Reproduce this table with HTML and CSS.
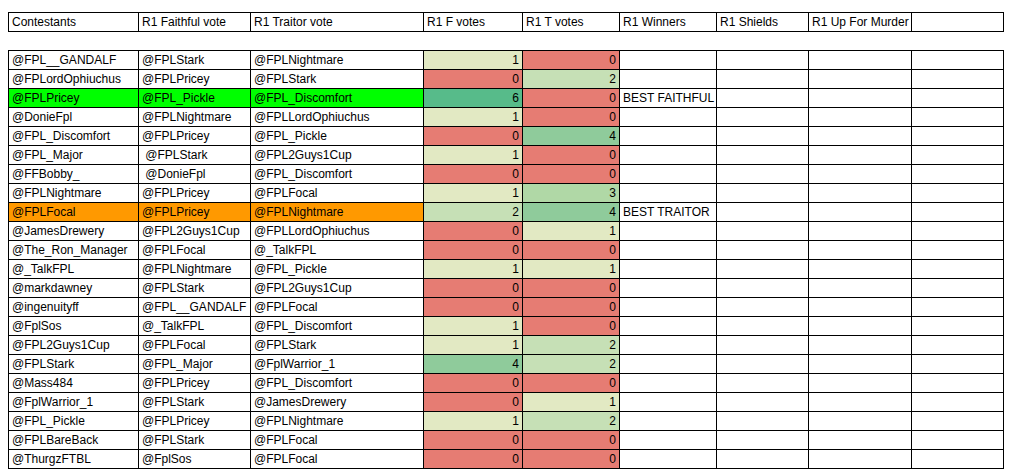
FILE: index.html
```html
<!DOCTYPE html>
<html>
<head>
<meta charset="utf-8">
<link rel="stylesheet" href="styles.css">
</head>
<body>
<div class="sheet">
<table class="grid">
<colgroup>
<col class="c1"><col class="c2"><col class="c3"><col class="c4"><col class="c5"><col class="c6"><col class="c7"><col class="c8"><col class="c9">
</colgroup>
<tr class="head"><td>Contestants</td><td>R1 Faithful vote</td><td>R1 Traitor vote</td><td>R1 F votes</td><td>R1 T votes</td><td>R1 Winners</td><td>R1 Shields</td><td>R1 Up For Murder</td><td></td></tr>
<tr class="gap"><td></td><td></td><td></td><td></td><td></td><td></td><td></td><td></td><td></td></tr>
<tr><td>@FPL__GANDALF</td><td>@FPLStark</td><td>@FPLNightmare</td><td class="n v1">1</td><td class="n v0">0</td><td></td><td></td><td></td><td></td></tr>
<tr><td>@FPLordOphiuchus</td><td>@FPLPricey</td><td>@FPLStark</td><td class="n v0">0</td><td class="n v2">2</td><td></td><td></td><td></td><td></td></tr>
<tr><td class="green">@FPLPricey</td><td class="green">@FPL_Pickle</td><td class="green">@FPL_Discomfort</td><td class="n v6">6</td><td class="n v0">0</td><td>BEST FAITHFUL</td><td></td><td></td><td></td></tr>
<tr><td>@DonieFpl</td><td>@FPLNightmare</td><td>@FPLLordOphiuchus</td><td class="n v1">1</td><td class="n v0">0</td><td></td><td></td><td></td><td></td></tr>
<tr><td>@FPL_Discomfort</td><td>@FPLPricey</td><td>@FPL_Pickle</td><td class="n v0">0</td><td class="n v4">4</td><td></td><td></td><td></td><td></td></tr>
<tr><td>@FPL_Major</td><td class="pre"> @FPLStark</td><td>@FPL2Guys1Cup</td><td class="n v1">1</td><td class="n v0">0</td><td></td><td></td><td></td><td></td></tr>
<tr><td>@FFBobby_</td><td class="pre"> @DonieFpl</td><td>@FPL_Discomfort</td><td class="n v0">0</td><td class="n v0">0</td><td></td><td></td><td></td><td></td></tr>
<tr><td>@FPLNightmare</td><td>@FPLPricey</td><td>@FPLFocal</td><td class="n v1">1</td><td class="n v3">3</td><td></td><td></td><td></td><td></td></tr>
<tr><td class="orange">@FPLFocal</td><td class="orange">@FPLPricey</td><td class="orange">@FPLNightmare</td><td class="n v2">2</td><td class="n v4">4</td><td>BEST TRAITOR</td><td></td><td></td><td></td></tr>
<tr><td>@JamesDrewery</td><td>@FPL2Guys1Cup</td><td>@FPLLordOphiuchus</td><td class="n v0">0</td><td class="n v1">1</td><td></td><td></td><td></td><td></td></tr>
<tr><td>@The_Ron_Manager</td><td>@FPLFocal</td><td>@_TalkFPL</td><td class="n v0">0</td><td class="n v0">0</td><td></td><td></td><td></td><td></td></tr>
<tr><td>@_TalkFPL</td><td>@FPLNightmare</td><td>@FPL_Pickle</td><td class="n v1">1</td><td class="n v1">1</td><td></td><td></td><td></td><td></td></tr>
<tr><td>@markdawney</td><td>@FPLStark</td><td>@FPL2Guys1Cup</td><td class="n v0">0</td><td class="n v0">0</td><td></td><td></td><td></td><td></td></tr>
<tr><td>@ingenuityff</td><td>@FPL__GANDALF</td><td>@FPLFocal</td><td class="n v0">0</td><td class="n v0">0</td><td></td><td></td><td></td><td></td></tr>
<tr><td>@FplSos</td><td>@_TalkFPL</td><td>@FPL_Discomfort</td><td class="n v1">1</td><td class="n v0">0</td><td></td><td></td><td></td><td></td></tr>
<tr><td>@FPL2Guys1Cup</td><td>@FPLFocal</td><td>@FPLStark</td><td class="n v1">1</td><td class="n v2">2</td><td></td><td></td><td></td><td></td></tr>
<tr><td>@FPLStark</td><td>@FPL_Major</td><td>@FplWarrior_1</td><td class="n v4">4</td><td class="n v2">2</td><td></td><td></td><td></td><td></td></tr>
<tr><td>@Mass484</td><td>@FPLPricey</td><td>@FPL_Discomfort</td><td class="n v0">0</td><td class="n v0">0</td><td></td><td></td><td></td><td></td></tr>
<tr><td>@FplWarrior_1</td><td>@FPLStark</td><td>@JamesDrewery</td><td class="n v0">0</td><td class="n v1">1</td><td></td><td></td><td></td><td></td></tr>
<tr><td>@FPL_Pickle</td><td>@FPLPricey</td><td>@FPLNightmare</td><td class="n v1">1</td><td class="n v2">2</td><td></td><td></td><td></td><td></td></tr>
<tr><td>@FPLBareBack</td><td>@FPLStark</td><td>@FPLFocal</td><td class="n v0">0</td><td class="n v0">0</td><td></td><td></td><td></td><td></td></tr>
<tr><td>@ThurgzFTBL</td><td>@FplSos</td><td>@FPLFocal</td><td class="n v0">0</td><td class="n v0">0</td><td></td><td></td><td></td><td></td></tr>
</table>
</div>
</body>
</html>
```

FILE: styles.css
```css
html, body {
  margin: 0;
  padding: 0;
  background: #ffffff;
}
.sheet {
  padding: 12px 0 0 8px;
}
.grid {
  border-collapse: collapse;
  table-layout: fixed;
  width: 995px;
  font-family: "Liberation Sans", Arial, sans-serif;
  font-size: 12px;
  color: #000;
}
.c1 { width: 130px; }
.c2 { width: 112px; }
.c3 { width: 173px; }
.c4 { width: 99px; }
.c5 { width: 97px; }
.c6 { width: 97px; }
.c7 { width: 92px; }
.c8 { width: 103px; }
.c9 { width: 92px; }
.grid td {
  border: 1px solid #000;
  height: 18px;
  padding: 0 3px;
  line-height: 18px;
  white-space: nowrap;
  overflow: hidden;
  vertical-align: middle;
  box-sizing: border-box;
}
.grid tr { height: 19px; }
.grid .gap td {
  border: none;
}
.pre { white-space: pre !important; }
.n { text-align: right; }
.green { background: #00ff00; }
.orange { background: #ff9900; }
.v0 { background: #e67c73; }
.v1 { background: #e2e9c3; }
.v2 { background: #c6e0b6; }
.v3 { background: #b0d8a6; }
.v4 { background: #8fcb9b; }
.v6 { background: #57bb8a; }
```
